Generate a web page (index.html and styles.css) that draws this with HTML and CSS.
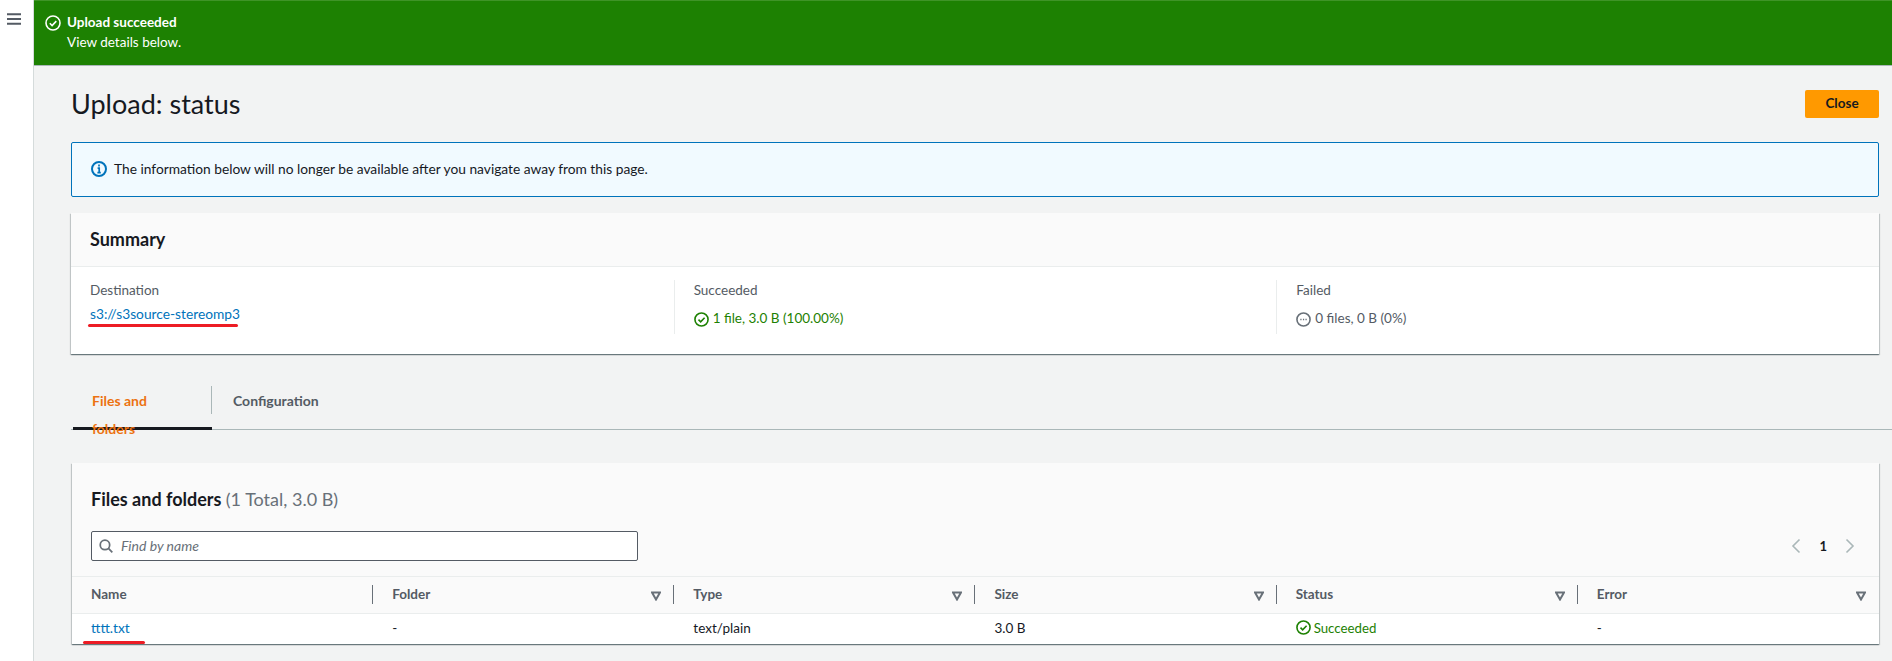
FILE: index.html
```html
<!DOCTYPE html>
<html lang="en">
<head>
<meta charset="utf-8">
<title>Upload: status</title>
<link rel="stylesheet" href="styles.css">
</head>
<body>
<div class="app">
  <aside class="rail">
    <svg class="burger" viewBox="0 0 14 12" width="14" height="12"><path d="M0 1.2h14M0 6h14M0 10.8h14" fill="none" stroke="#545b64" stroke-width="2"/></svg>
  </aside>
  <div class="main">
    <div class="flash">
      <svg class="ic" viewBox="0 0 16 16" width="16" height="16"><circle cx="8" cy="8" r="7" fill="none" stroke="#fff" stroke-width="1.6"/><path d="M4.8 8.2l2.3 2.3 4.2-4.4" fill="none" stroke="#fff" stroke-width="1.6"/></svg>
      <div class="flash-text">
        <div class="flash-title">Upload succeeded</div>
        <div>View details below.</div>
      </div>
    </div>
    <div class="content">
      <header class="page-head">
        <h1>Upload: status</h1>
        <button class="btn-primary">Close</button>
      </header>
      <div class="alert">
        <svg class="ic" viewBox="0 0 16 16" width="16" height="16"><circle cx="8" cy="8" r="7" fill="none" stroke="#0073bb" stroke-width="2"/><path d="M8 3.6v2M6.6 7.2h1.6v4.4M6.4 11.6h3.4" fill="none" stroke="#0073bb" stroke-width="1.7"/></svg>
        <span>The information below will no longer be available after you navigate away from this page.</span>
      </div>
      <section class="card summary">
        <h2 class="card-head">Summary</h2>
        <div class="stats">
          <div class="stat">
            <div class="label">Destination</div>
            <a class="link marked marked-wide">s3://s3source-stereomp3</a>
          </div>
          <div class="stat">
            <div class="label">Succeeded</div>
            <div class="val ok">
              <svg class="ic" viewBox="0 0 16 16" width="15" height="15"><circle cx="8" cy="8" r="7" fill="none" stroke="#1d8102" stroke-width="1.7"/><path d="M4.8 8.2l2.3 2.3 4.2-4.4" fill="none" stroke="#1d8102" stroke-width="1.7"/></svg>
              <span>1 file, 3.0 B (100.00%)</span>
            </div>
          </div>
          <div class="stat">
            <div class="label">Failed</div>
            <div class="val muted">
              <svg class="ic" viewBox="0 0 16 16" width="15" height="15"><circle cx="8" cy="8" r="7" fill="none" stroke="#687078" stroke-width="1.7"/><path d="M4.6 8h1.3M7.4 8h1.3M10.1 8h1.3" fill="none" stroke="#687078" stroke-width="1.6"/></svg>
              <span>0 files, 0 B (0%)</span>
            </div>
          </div>
        </div>
      </section>
      <nav class="tabs">
        <div class="tab active">Files and folders</div>
        <div class="tab">Configuration</div>
      </nav>
      <section class="card files">
        <div class="files-head">
          <h2 class="files-title">Files and folders <span class="count">(1 Total, 3.0 B)</span></h2>
          <div class="tools">
            <div class="search">
              <svg viewBox="0 0 16 16" width="14" height="14"><circle cx="6.8" cy="6.8" r="5.4" fill="none" stroke="#687078" stroke-width="2"/><path d="M10.8 10.8l4.4 4.4" fill="none" stroke="#687078" stroke-width="2"/></svg>
              <span>Find by name</span>
            </div>
            <div class="pager">
              <svg viewBox="0 0 10 16" width="10" height="16"><path d="M8.5 1.5L2 8l6.5 6.5" fill="none" stroke="#aab7b8" stroke-width="1.6"/></svg>
              <span>1</span>
              <svg viewBox="0 0 10 16" width="10" height="16"><path d="M1.5 1.5L8 8l-6.5 6.5" fill="none" stroke="#aab7b8" stroke-width="1.6"/></svg>
            </div>
          </div>
        </div>
        <div class="thead">
          <div class="th"><span>Name</span></div>
          <div class="th"><span>Folder</span><svg class="filter" viewBox="0 0 10 10" width="10" height="10"><path d="M1 1.5h8L5 8.5z" fill="none" stroke="#687078" stroke-width="2"/></svg></div>
          <div class="th"><span>Type</span><svg class="filter" viewBox="0 0 10 10" width="10" height="10"><path d="M1 1.5h8L5 8.5z" fill="none" stroke="#687078" stroke-width="2"/></svg></div>
          <div class="th"><span>Size</span><svg class="filter" viewBox="0 0 10 10" width="10" height="10"><path d="M1 1.5h8L5 8.5z" fill="none" stroke="#687078" stroke-width="2"/></svg></div>
          <div class="th"><span>Status</span><svg class="filter" viewBox="0 0 10 10" width="10" height="10"><path d="M1 1.5h8L5 8.5z" fill="none" stroke="#687078" stroke-width="2"/></svg></div>
          <div class="th last"><span>Error</span><svg class="filter" viewBox="0 0 10 10" width="10" height="10"><path d="M1 1.5h8L5 8.5z" fill="none" stroke="#687078" stroke-width="2"/></svg></div>
        </div>
        <div class="trow">
          <div class="td"><a class="link marked">tttt.txt</a></div>
          <div class="td">-</div>
          <div class="td">text/plain</div>
          <div class="td">3.0 B</div>
          <div class="td ok status">
            <svg class="ic" viewBox="0 0 16 16" width="15" height="15"><circle cx="8" cy="8" r="7" fill="none" stroke="#1d8102" stroke-width="1.7"/><path d="M4.8 8.2l2.3 2.3 4.2-4.4" fill="none" stroke="#1d8102" stroke-width="1.7"/></svg>
            <span>Succeeded</span>
          </div>
          <div class="td">-</div>
        </div>
      </section>
    </div>
  </div>
</div>
</body>
</html>
```

FILE: styles.css
```css
* { box-sizing: border-box; }
html, body { margin: 0; height: 100%; overflow: hidden; }
body {
  font-family: "Lato", "Noto Sans", sans-serif;
  font-size: 13.5px;
  line-height: 20px;
  color: #16191f;
  background: #f2f3f3;
}
.app { display: flex; height: 661px; }
.rail {
  width: 34px;
  flex: none;
  background: #fff;
  border-right: 1px solid #d5dbdb;
  padding: 13px 0 0 7px;
}
.burger { display: block; }
.main { flex: 1; min-width: 0; }
.ic { flex: none; display: block; }

.flash {
  height: 66px;
  background: #1d8102;
  border-bottom: 1px solid #aab7b8;
  border-top: 1px solid #3f9427;
  color: #fff;
  display: flex;
  align-items: flex-start;
  padding: 11px 0 0 11px;
  gap: 6px;
  font-size: 13.5px;
}
.flash .ic { margin-top: 3px; }
.flash-title { font-weight: 700; }

.content { padding: 0 13px 0 37px; }
.page-head {
  display: flex;
  justify-content: space-between;
  align-items: flex-start;
  padding-top: 24px;
  height: 76px;
}
.page-head h1 { margin: -1px 0 0; font-weight: 400; font-size: 27px; line-height: 30px; }
.btn-primary {
  width: 74px;
  height: 28px;
  background: #ff9900;
  border: 0;
  border-radius: 2px;
  font: 700 13.5px/20px "Lato", "Noto Sans", sans-serif;
  color: #16191f;
  padding: 0 0 2px;
}
.alert {
  height: 55px;
  border: 1px solid #0073bb;
  border-radius: 2px;
  background: #f1faff;
  display: flex;
  align-items: center;
  gap: 7px;
  padding: 0 0 1px 19px;
  color: #16191f;
  font-size: 13.75px;
  margin-bottom: 16px;
}
.card {
  background: #fff;
  box-shadow: 0 1px 1px 0 rgba(0,28,36,.4), 1px 1px 1px 0 rgba(0,28,36,.15), -1px 1px 1px 0 rgba(0,28,36,.15);
}
.summary { height: 141px; }
.card-head {
  margin: 0;
  height: 54px;
  background: #fafafa;
  border-bottom: 1px solid #eaeded;
  padding: 14px 19px;
  font-size: 18px;
  line-height: 24px;
  font-weight: 700;
}
.stats {
  display: grid;
  grid-template-columns: repeat(3, 1fr);
  padding-top: 13px;
}
.stat { height: 54px; padding-left: 19px; border-left: 1px solid #eaeded; }
.stat:first-child { border-left: 0; }
.label { color: #545b64; margin-bottom: 4px; }
.link { color: #0073bb; text-decoration: none; font-size: 13.75px; }
.marked { position: relative; display: inline-block; }
.marked::after {
  content: "";
  position: absolute;
  left: -8px;
  right: -15px;
  bottom: -6px;
  height: 3px;
  border-radius: 2px;
  background: #ed1c24;
}
.marked-wide::after { left: -2px; right: 2px; bottom: -3px; }
.val { display: flex; align-items: center; gap: 4px; margin-top: 8px; }
.val .ic { margin-top: 2px; }
.ok { color: #1d8102; }
.muted { color: #545b64; }

.tabs {
  margin-top: 30px;
  height: 46px;
  display: flex;
  align-items: flex-start;
  border-bottom: 1px solid #aab7b8;
  margin-right: -13px;
}
.tab {
  height: 46px;
  padding: 3px 20px 0;
  font-weight: 700;
  color: #545b64;
  font-size: 14px;
  line-height: 28px;
  position: relative;
}
.tab.active {
  color: #ec7211;
  width: 139px;
  border-bottom: 3px solid #16191f;
  margin: 0 1px 0 2px;
  padding-left: 19px;
}
.tab.active::after {
  content: "";
  position: absolute;
  right: 0;
  top: 2px;
  height: 28px;
  width: 1px;
  background: #aab7b8;
}
.files { margin-top: 33px; margin-left: 1px; }
.files-head { height: 114px; background: #fafafa; padding: 24px 24px 0 19px; border-bottom: 1px solid #eaeded; }
.files-title { margin: 0; font-size: 18px; line-height: 24px; font-weight: 700; }
.count { font-weight: 400; color: #687078; }
.tools { display: flex; justify-content: space-between; align-items: center; margin-top: 20px; }
.search {
  width: 547px;
  height: 30px;
  border: 1px solid #545b64;
  border-radius: 2px;
  background: #fff;
  display: flex;
  align-items: center;
  gap: 8px;
  padding-left: 7px;
  font-style: italic;
  font-size: 14px;
  color: #687078;
}
.pager { display: flex; align-items: center; gap: 18px; font-weight: 700; font-size: 13px; color: #16191f; }
.thead, .trow { display: grid; grid-template-columns: repeat(6, 1fr); }
.thead { height: 37px; background: #fafafa; border-bottom: 1px solid #eaeded; }
.th {
  display: flex;
  align-items: center;
  justify-content: space-between;
  padding: 0 13px 3px 19px;
  font-weight: 700;
  color: #545b64;
  position: relative;
}
.th:not(.last)::after {
  content: "";
  position: absolute;
  right: 0;
  top: 8px;
  height: 19px;
  width: 1px;
  background: #687078;
}
.filter { display: block; flex: none; margin-top: 5px; }
.trow { height: 30px; }
.td { display: flex; align-items: center; gap: 4px; padding: 0 0 3px 19px; color: #16191f; }
.td.ok { color: #1d8102; }
.status { gap: 3px; font-size: 13.25px; }
```
